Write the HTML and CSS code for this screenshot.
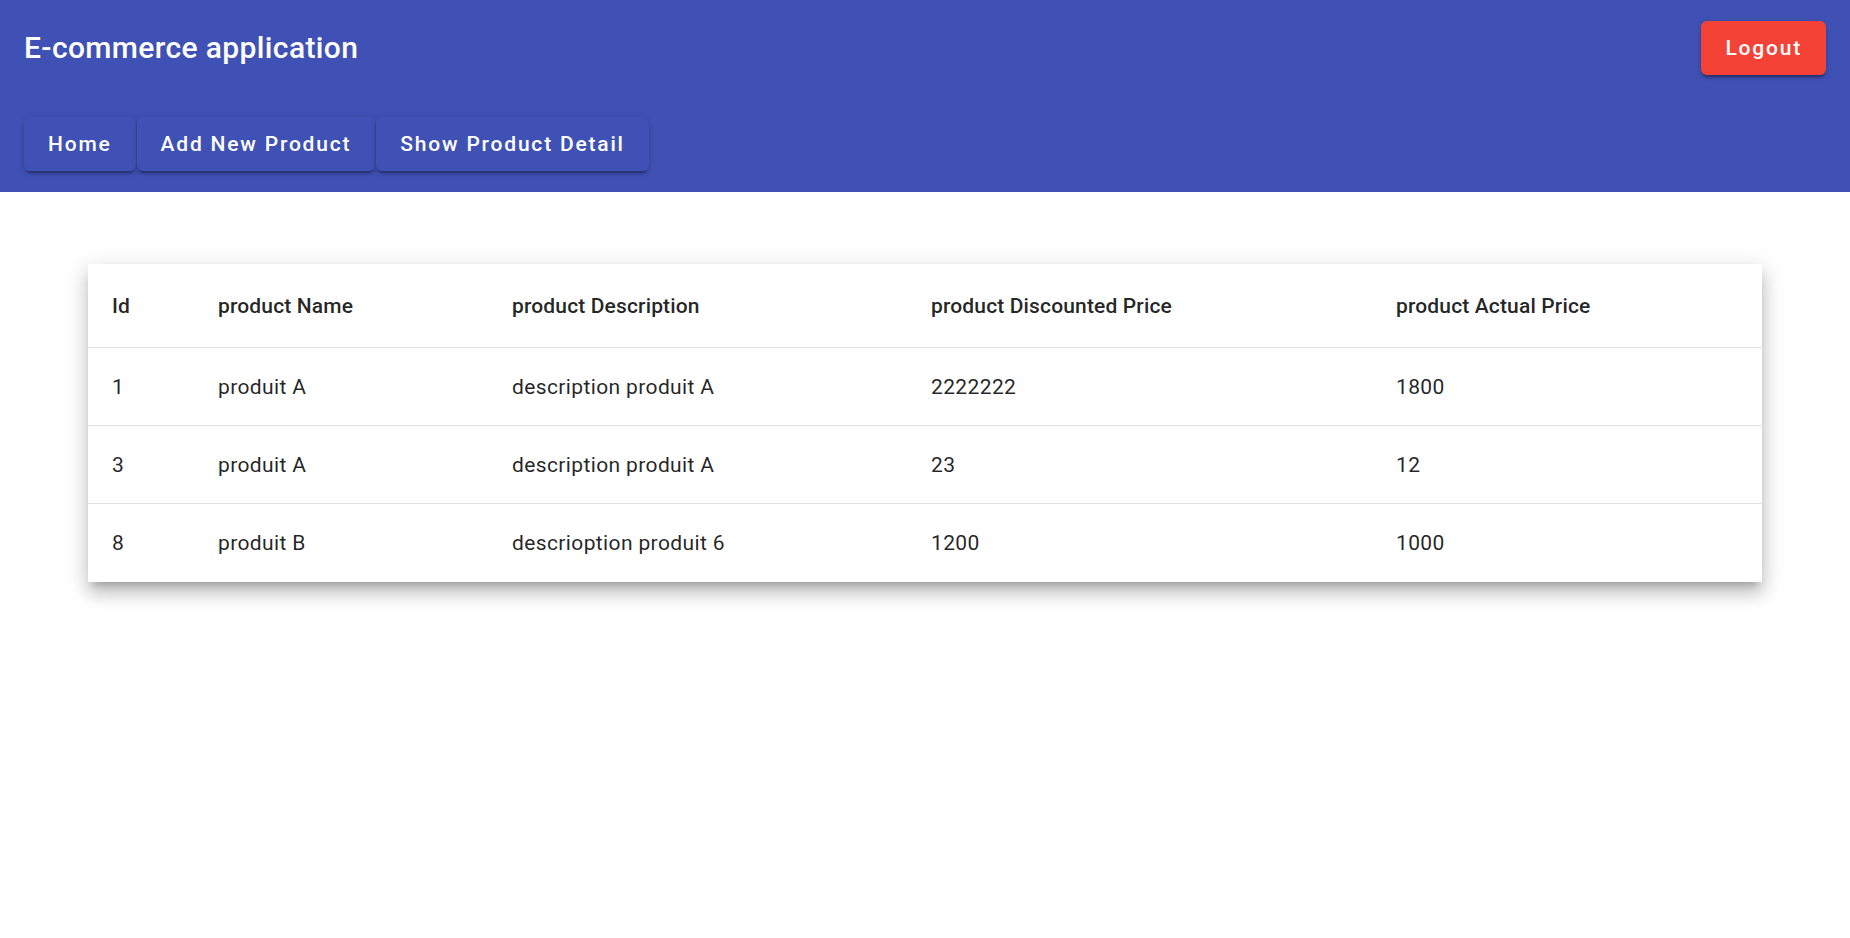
FILE: index.html
```html
<!DOCTYPE html>
<html lang="en">
<head>
<meta charset="utf-8">
<title>E-commerce application</title>
<link rel="stylesheet" href="styles.css">
</head>
<body>
<header class="toolbar">
  <div class="toolbar-row top-row">
    <span class="app-title">E-commerce application</span>
    <button class="btn btn-warn">Logout</button>
  </div>
  <div class="toolbar-row nav-row">
    <button class="btn btn-primary">Home</button>
    <button class="btn btn-primary">Add New Product</button>
    <button class="btn btn-primary">Show Product Detail</button>
  </div>
</header>
<main class="content">
  <div class="card">
    <table class="product-table">
      <colgroup>
        <col class="c-id">
        <col class="c-name">
        <col class="c-desc">
        <col class="c-disc">
        <col class="c-actual">
      </colgroup>
      <thead>
        <tr>
          <th>Id</th>
          <th>product Name</th>
          <th>product Description</th>
          <th>product Discounted Price</th>
          <th>product Actual Price</th>
        </tr>
      </thead>
      <tbody>
        <tr>
          <td>1</td>
          <td>produit A</td>
          <td>description produit A</td>
          <td>2222222</td>
          <td>1800</td>
        </tr>
        <tr>
          <td>3</td>
          <td>produit A</td>
          <td>description produit A</td>
          <td>23</td>
          <td>12</td>
        </tr>
        <tr>
          <td>8</td>
          <td>produit B</td>
          <td>descrioption produit 6</td>
          <td>1200</td>
          <td>1000</td>
        </tr>
      </tbody>
    </table>
  </div>
</main>
</body>
</html>
```
FILE: styles.css
```css
html, body {
  margin: 0;
  padding: 0;
  background: #ffffff;
  font-family: Roboto, "Helvetica Neue", sans-serif;
}

.toolbar {
  background: #3f51b5;
  color: #ffffff;
}

.toolbar-row {
  height: 96px;
  display: flex;
  align-items: center;
  padding: 0 24px;
  box-sizing: border-box;
}

.top-row {
  justify-content: space-between;
}

.nav-row {
  gap: 1px;
}

.app-title {
  font-size: 30px;
  font-weight: 500;
  letter-spacing: 0.375px;
  line-height: 48px;
}

.btn {
  height: 54px;
  padding: 0 24px;
  border: none;
  border-radius: 6px;
  font-family: Roboto, "Helvetica Neue", sans-serif;
  font-size: 21px;
  font-weight: 500;
  letter-spacing: 1.8px;
  color: #ffffff;
  cursor: pointer;
  box-shadow: 0 4.5px 1.5px -3px rgba(0,0,0,.2), 0 3px 3px 0 rgba(0,0,0,.14), 0 1.5px 7.5px 0 rgba(0,0,0,.12);
}

.btn-primary {
  background: #3f51b5;
}

.btn-warn {
  background: #f44336;
}

.content {
  padding: 72px 88px;
}

.card {
  background: #ffffff;
  box-shadow: 0 7.5px 7.5px -4.5px rgba(0,0,0,.2), 0 12px 15px 1.5px rgba(0,0,0,.14), 0 4.5px 21px 3px rgba(0,0,0,.12);
}

.product-table {
  width: 100%;
  border-collapse: separate;
  border-spacing: 0;
  table-layout: fixed;
  color: rgba(0,0,0,.87);
}

.c-id { width: 106px; }
.c-name { width: 294px; }
.c-desc { width: 419px; }
.c-disc { width: 465px; }
.c-actual { width: auto; }

.product-table th,
.product-table td {
  text-align: left;
  padding: 0 24px;
  font-size: 21px;
  white-space: nowrap;
}

.product-table th {
  height: 83px;
  font-weight: 500;
  letter-spacing: 0.15px;
  border-bottom: 1px solid #e0e0e0;
}

.product-table td {
  height: 77px;
  font-weight: 400;
  letter-spacing: 0.375px;
  border-bottom: 1px solid #e0e0e0;
}

.product-table tbody tr:last-child td {
  border-bottom: none;
  height: 78px;
}
```
